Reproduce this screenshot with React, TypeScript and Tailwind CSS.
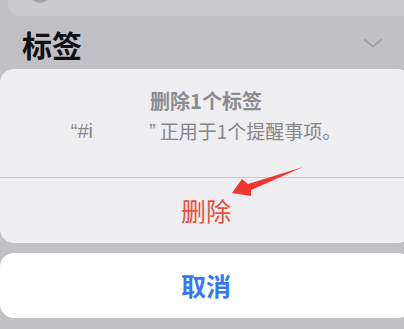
export default function App() {
  return (
    <div
      className="relative w-[404px] h-[329px] overflow-hidden bg-[#c1c0c5] flex flex-col"
      style={{ fontFamily: '"Noto Sans CJK SC", "Noto Sans", sans-serif' }}
    >
      {/* list card behind the sheet */}
      <div className="relative ml-2 w-[420px] h-4 shrink-0 bg-[#cbcbcd] rounded-bl-[12px] overflow-hidden">
        <div className="absolute left-[21px] -top-[19px] w-[22px] h-[22px] rounded-full bg-[#a2a2a4]"></div>
      </div>

      <div className="h-[53px] shrink-0 flex items-center justify-between pl-[22px] pr-[21px]">
        <span className="text-[30px] leading-none font-bold text-[#111] pt-[3px]">标签</span>
        <svg width="20" height="12" viewBox="0 0 20 12" className="mt-[1px]">
          <path d="M2 3 L10 9.5 L18 3" fill="none" stroke="#a3a3a7" strokeWidth="2.2" strokeLinecap="round" strokeLinejoin="round" />
        </svg>
      </div>

      {/* action sheet */}
      <div className="w-[412px] h-[174px] shrink-0 bg-[#eeeef0] rounded-[14px] flex flex-col">
        <div className="h-[108px] flex flex-col items-center pt-[19px]">
          <div className="text-[20px] leading-[26px] font-semibold text-[#8b8b8f]">删除1个标签</div>
          <div className="text-[19px] leading-[30px] text-[#86868a] mt-[2px] flex items-center">
            <span className="text-[20px]" style={{ fontFamily: '"Liberation Sans", sans-serif' }}>“#i</span>
            <span className="inline-block w-[56px]"></span>
            <span className="mr-[4px] text-[20px]" style={{ fontFamily: '"Liberation Sans", sans-serif' }}>”</span>
            <span>正用于1个提醒事项。</span>
          </div>
        </div>
        <div className="h-px bg-[#c8c8cb]"></div>
        <div className="flex-1 flex items-center justify-center pb-[1px]">
          <span className="text-[25px] leading-none text-[#eb4d3d]">删除</span>
        </div>
      </div>

      <div className="mt-[10px] w-[412px] h-[65px] shrink-0 bg-white rounded-[14px] flex items-center justify-center">
        <span className="text-[25px] leading-none font-semibold text-[#3478f6]">取消</span>
      </div>

      {/* red annotation arrow */}
      <svg className="absolute left-0 top-0 pointer-events-none" width="404" height="329" viewBox="0 0 404 329">
        <polygon points="232,193 242,179 248,184 303,167 251,190 251,196" fill="#f4352f" />
      </svg>
    </div>
  );
}
